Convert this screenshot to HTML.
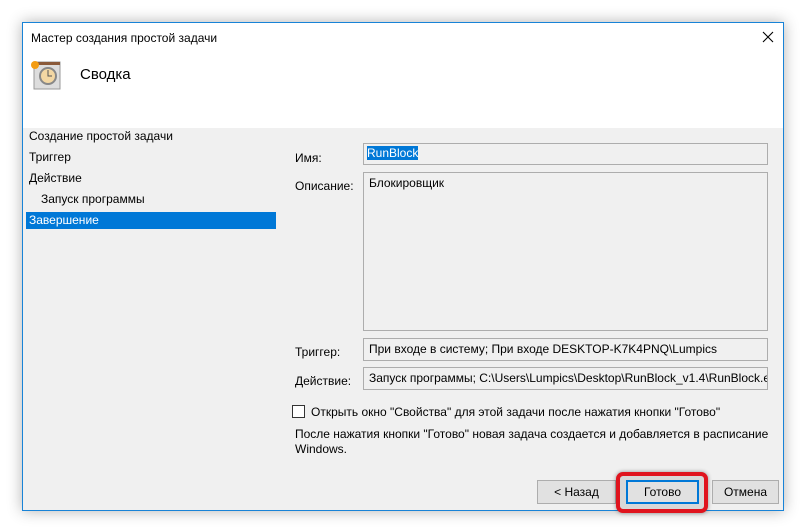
<!DOCTYPE html><html><head><meta charset="utf-8"><style>
body{margin:0;width:806px;height:532px;background:#fff;position:relative;overflow:hidden;font-family:"Liberation Sans",sans-serif;font-size:12px;color:#000}
.a{position:absolute}
.win{left:22px;top:22px;width:760px;height:487px;border:1px solid #1883d7;background:#f0f0f0;box-shadow:0 0 14px rgba(0,0,0,.3)}
.box{position:absolute;background:#f0f0f0;border:1px solid #adadad;box-sizing:border-box;padding:3px 5px;white-space:nowrap;overflow:hidden}
.btn{position:absolute;top:480px;height:24px;background:#e1e1e1;border:1px solid #adadad;box-sizing:border-box;text-align:center;line-height:22px}
</style></head><body>
<div class="a win"></div>
<div class="a" style="left:23px;top:23px;width:760px;height:105px;background:#fff"></div>
<div class="a" style="left:31px;top:31px;font-size:12px">Мастер создания простой задачи</div>
<svg class="a" style="left:762px;top:31px" width="12" height="12"><path d="M1 1L11 11M11 1L1 11" stroke="#000" stroke-width="1.1"/></svg>
<svg class="a" style="left:28px;top:58px" width="34" height="34"><rect x="6" y="4" width="26" height="27" fill="#ddd" stroke="#999"/><rect x="6" y="4" width="26" height="3" fill="#8a5a3a"/><circle cx="20" cy="18" r="8" fill="#f3d7a3" stroke="#888" stroke-width="2"/><path d="M20 12v6h4" stroke="#555" fill="none"/><circle cx="7" cy="7" r="4" fill="#f39c12"/></svg>
<div class="a" style="left:80px;top:66px;font-size:15px">Сводка</div>
<div class="a" style="left:29px;top:129px">Создание простой задачи</div>
<div class="a" style="left:29px;top:150px">Триггер</div>
<div class="a" style="left:29px;top:171px">Действие</div>
<div class="a" style="left:41px;top:192px">Запуск программы</div>
<div class="a" style="left:26px;top:212px;width:250px;height:17px;background:#0078d7;color:#fff;padding-left:3px;box-sizing:border-box;line-height:16px">Завершение</div>
<div class="a" style="left:295px;top:151px">Имя:</div>
<div class="box" style="left:363px;top:143px;width:405px;height:22px;padding:2px 3px"><span style="background:#0078d7;color:#fff">RunBlock</span></div>
<div class="a" style="left:295px;top:179px">Описание:</div>
<div class="box" style="left:363px;top:172px;width:405px;height:159px">Блокировщик</div>
<div class="a" style="left:295px;top:345px">Триггер:</div>
<div class="box" style="left:363px;top:338px;width:405px;height:23px">При входе в систему; При входе DESKTOP-K7K4PNQ\Lumpics</div>
<div class="a" style="left:295px;top:374px">Действие:</div>
<div class="box" style="left:363px;top:367px;width:405px;height:23px">Запуск программы; C:\Users\Lumpics\Desktop\RunBlock_v1.4\RunBlock.exe</div>
<div class="a" style="left:292px;top:405px;width:13px;height:13px;border:1px solid #333;background:#fff;box-sizing:border-box"></div>
<div class="a" style="left:311px;top:405px">Открыть окно "Свойства" для этой задачи после нажатия кнопки "Готово"</div>
<div class="a" style="left:295px;top:427px;line-height:15px">После нажатия кнопки "Готово" новая задача создается и добавляется в расписание<br>Windows.</div>
<div class="btn" style="left:537px;width:79px">&lt; Назад</div>
<div class="a" style="left:616px;top:472px;width:92px;height:41px;border:4px solid #e0141e;border-radius:7px;box-sizing:border-box;background:#d8d8d8;box-shadow:0 0 4px rgba(0,0,0,.4)"></div>
<div class="btn" style="left:626px;width:73px;border:2px solid #0078d7;line-height:20px">Готово</div>
<div class="btn" style="left:712px;width:67px">Отмена</div>
</body></html>
